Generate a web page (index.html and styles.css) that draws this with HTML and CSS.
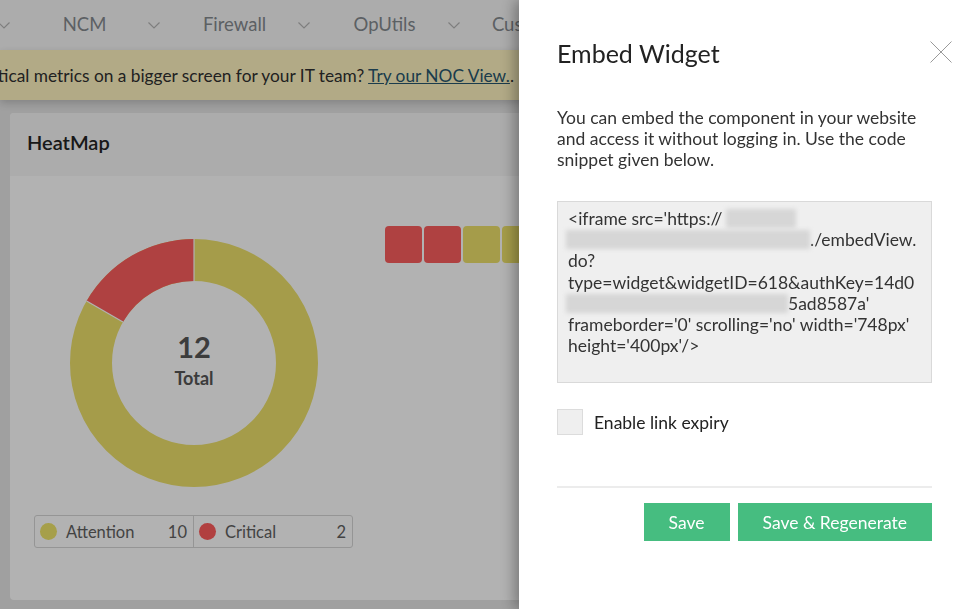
FILE: index.html
```html
<!DOCTYPE html>
<html lang="en">
<head>
<meta charset="utf-8">
<title>Embed Widget</title>
<link rel="stylesheet" href="styles.css">
</head>
<body>
<div class="app">
  <nav class="topnav">
    <div class="nav-track">
      <div class="nav-item"><span class="nav-label">Network</span><svg class="chev" width="12" height="7" viewBox="0 0 12 7"><polyline points="0.5,0.5 6,6 11.5,0.5"/></svg></div>
      <div class="nav-item"><span class="nav-label">NCM</span><svg class="chev" width="12" height="7" viewBox="0 0 12 7"><polyline points="0.5,0.5 6,6 11.5,0.5"/></svg></div>
      <div class="nav-item"><span class="nav-label">Firewall</span><svg class="chev" width="12" height="7" viewBox="0 0 12 7"><polyline points="0.5,0.5 6,6 11.5,0.5"/></svg></div>
      <div class="nav-item"><span class="nav-label">OpUtils</span><svg class="chev" width="12" height="7" viewBox="0 0 12 7"><polyline points="0.5,0.5 6,6 11.5,0.5"/></svg></div>
      <div class="nav-item"><span class="nav-label">Customize</span><svg class="chev" width="12" height="7" viewBox="0 0 12 7"><polyline points="0.5,0.5 6,6 11.5,0.5"/></svg></div>
    </div>
  </nav>
  <div class="banner">
    <span class="banner-text">Want to view critical metrics on a bigger screen for your IT team? <a class="banner-link" href="#">Try our NOC View.</a>.</span>
  </div>
  <main class="content">
    <section class="card">
      <header class="card-head">HeatMap</header>
      <div class="card-body">
        <div class="chart-col">
          <div class="donut">
            <svg width="248" height="248" viewBox="0 0 248 248">
              <circle cx="124" cy="124" r="103" fill="none" stroke="#ece06a" stroke-width="42"/>
              <path d="M124 0 A124 124 0 0 0 16.61 62 L52.99 83 A82 82 0 0 1 124 42 Z" fill="#fb5d5d"/>
              <line x1="124" y1="0" x2="124" y2="42" stroke="#ffffff" stroke-width="1.2"/>
              <line x1="16.61" y1="62" x2="52.99" y2="83" stroke="#ffffff" stroke-width="1.2"/>
              <text class="donut-num" x="124" y="119" text-anchor="middle">12</text>
              <text class="donut-lbl" x="124" y="146" text-anchor="middle">Total</text>
            </svg>
          </div>
          <div class="legend">
            <div class="legend-cell"><span class="dot dot-attn"></span><span class="legend-name">Attention</span><span class="legend-count">10</span></div>
            <div class="legend-cell"><span class="dot dot-crit"></span><span class="legend-name">Critical</span><span class="legend-count">2</span></div>
          </div>
        </div>
        <div class="cells">
          <span class="cell cell-crit"></span>
          <span class="cell cell-crit"></span>
          <span class="cell cell-attn"></span>
          <span class="cell cell-attn"></span>
          <span class="cell cell-attn"></span>
          <span class="cell cell-attn"></span>
          <span class="cell cell-attn"></span>
          <span class="cell cell-attn"></span>
        </div>
      </div>
    </section>
  </main>
</div>

<div class="backdrop"></div>

<aside class="drawer">
  <h2 class="drawer-title">Embed Widget</h2>
  <button class="close" aria-label="Close">
    <svg width="22" height="22" viewBox="0 0 22 22"><line x1="0.5" y1="0.5" x2="21.5" y2="21.5"/><line x1="21.5" y1="0.5" x2="0.5" y2="21.5"/></svg>
  </button>
  <p class="drawer-desc">You can embed the component in your website and access it without logging in. Use the code snippet given below.</p>
  <div class="code">
    <div class="code-line">&lt;iframe src='https://<span class="redact r1"></span></div>
    <div class="code-line"><span class="redact r2"></span>./embedView.</div>
    <div class="code-line">do?</div>
    <div class="code-line">type=widget&amp;widgetID=618&amp;authKey=14d0</div>
    <div class="code-line"><span class="redact r3"></span>5ad8587a'</div>
    <div class="code-line">frameborder='0' scrolling='no' width='748px'</div>
    <div class="code-line">height='400px'/&gt;</div>
  </div>
  <label class="check-row"><span class="checkbox"></span><span class="check-label">Enable link expiry</span></label>
  <div class="divider"></div>
  <div class="actions">
    <button class="btn">Save</button>
    <button class="btn">Save &amp; Regenerate</button>
  </div>
</aside>
</body>
</html>
```
FILE: styles.css
```css
* { box-sizing: border-box; }

html, body {
  margin: 0;
  padding: 0;
  width: 967px;
  height: 609px;
  overflow: hidden;
  font-family: Lato, "Open Sans", sans-serif;
}

.app {
  width: 967px;
  height: 609px;
  background: #e5e5e5;
  display: flex;
  flex-direction: column;
}

/* top navigation */
.topnav {
  height: 50px;
  background: #f7f7f7;
  overflow: hidden;
  flex: none;
}
.nav-track {
  display: flex;
  height: 100%;
  margin-left: -129px;
}
.nav-item {
  flex: none;
  width: 150px;
  display: flex;
  align-items: center;
}
.nav-label {
  width: 127px;
  text-align: center;
  font-size: 18.5px;
  color: #858a8f;
  white-space: nowrap;
  margin-top: -3px;
}
.chev {
  flex: none;
  margin-top: 0;
}
.chev polyline {
  fill: none;
  stroke: #b5b5b5;
  stroke-width: 1.2;
}

/* banner */
.banner {
  height: 50px;
  flex: none;
  background: #fff4c1;
  display: flex;
  align-items: center;
  justify-content: flex-end;
  padding-right: 453px;
  overflow: hidden;
  white-space: nowrap;
  box-shadow: 0 3px 8px rgba(0, 0, 0, 0.18);
  position: relative;
}
.banner-text {
  font-size: 17.3px;
  color: #303030;
}
.banner-link {
  color: #28566d;
  text-decoration: underline;
}

/* content */
.content {
  flex: 1;
  padding: 13px 0 9px 10px;
  display: flex;
  min-height: 0;
}
.card {
  width: 950px;
  flex: none;
  background: #ffffff;
  border-radius: 4px;
  overflow: hidden;
  display: flex;
  flex-direction: column;
}
.card-head {
  height: 63px;
  flex: none;
  background: #f6f6f6;
  display: flex;
  align-items: center;
  padding: 0 0 5px 17px;
  font-size: 20px;
  font-weight: 600;
  color: #252525;
}
.card-body {
  flex: 1;
  display: flex;
}
.chart-col {
  width: 375px;
  flex: none;
  padding: 63px 0 0 24px;
}
.donut {
  margin-left: 36px;
  width: 248px;
  height: 248px;
}
.donut svg { display: block; }
.donut-num {
  font-family: Lato, "Open Sans", sans-serif;
  font-size: 29px;
  font-weight: 700;
  fill: #565656;
}
.donut-lbl {
  font-family: Lato, "Open Sans", sans-serif;
  font-size: 18px;
  font-weight: 700;
  fill: #565656;
}

.legend {
  margin-top: 28px;
  width: 319px;
  height: 33px;
  border: 1px solid #d6d6d6;
  border-radius: 3px;
  display: flex;
}
.legend-cell {
  flex: 1;
  display: flex;
  align-items: center;
  padding: 0 6px 0 5px;
  font-size: 16.5px;
  color: #616161;
}
.legend-cell + .legend-cell {
  border-left: 1px solid #d6d6d6;
}
.dot {
  width: 17px;
  height: 17px;
  border-radius: 50%;
  flex: none;
  margin-right: 9px;
}
.dot-attn { background: #eee46a; }
.dot-crit { background: #fe5c5c; }
.legend-count { margin-left: auto; }

.cells {
  display: flex;
  gap: 2px;
  padding-top: 50px;
  align-items: flex-start;
}
.cell {
  width: 37px;
  height: 37px;
  border-radius: 4px;
  flex: none;
}
.cell-crit { background: #fb5d5d; }
.cell-attn { background: #ece06a; }

/* modal backdrop */
.backdrop {
  position: fixed;
  inset: 0;
  z-index: 10;
  background: rgba(0, 0, 0, 0.3);
}

/* drawer */
.drawer {
  position: fixed;
  top: 0;
  right: 0;
  z-index: 11;
  width: 448px;
  height: 609px;
  background: #ffffff;
  padding: 38px 35px 0 38px;
  box-shadow: -4px 0 14px rgba(0, 0, 0, 0.35);
}
.drawer-title {
  margin: 0;
  font-size: 25px;
  line-height: 31px;
  font-weight: 400;
  color: #222222;
}
.close {
  position: absolute;
  top: 41px;
  right: 15px;
  width: 22px;
  height: 22px;
  padding: 0;
  border: 0;
  background: none;
}
.close svg { display: block; }
.close line {
  stroke: #9a9a9a;
  stroke-width: 1;
}
.drawer-desc {
  margin: 38px 0 0;
  font-size: 17.5px;
  line-height: 21px;
  color: #333333;
}
.code {
  margin-top: 31px;
  height: 182px;
  background: #efefef;
  border: 1px solid #d9d9d9;
  padding: 6px 10px;
  font-size: 17.5px;
  line-height: 21.2px;
  color: #333333;
  white-space: nowrap;
}
.code-line {
  display: flex;
  align-items: center;
  height: 21.2px;
}
.redact {
  display: inline-block;
  height: 19px;
  background: #d6d6d6;
  filter: blur(2px);
}
.r1 { width: 70px; margin-left: 4px; }
.r2 { width: 244px; margin-left: -2px; }
.r3 { width: 222px; margin-left: -2px; }

.check-row {
  margin-top: 26px;
  display: flex;
  align-items: center;
}
.checkbox {
  width: 26px;
  height: 26px;
  background: #efefef;
  border: 1px solid #dcdcdc;
  flex: none;
}
.check-label {
  margin-left: 11px;
  font-size: 17.5px;
  color: #222222;
}
.divider {
  margin-top: 51px;
  height: 2px;
  background: #ececec;
}
.actions {
  margin-top: 15px;
  display: flex;
  justify-content: flex-end;
  gap: 8px;
}
.btn {
  height: 38px;
  padding: 0 25px;
  border: 0;
  background: #46bd80;
  color: #ffffff;
  font-family: Lato, "Open Sans", sans-serif;
  font-size: 17.5px;
}
```
